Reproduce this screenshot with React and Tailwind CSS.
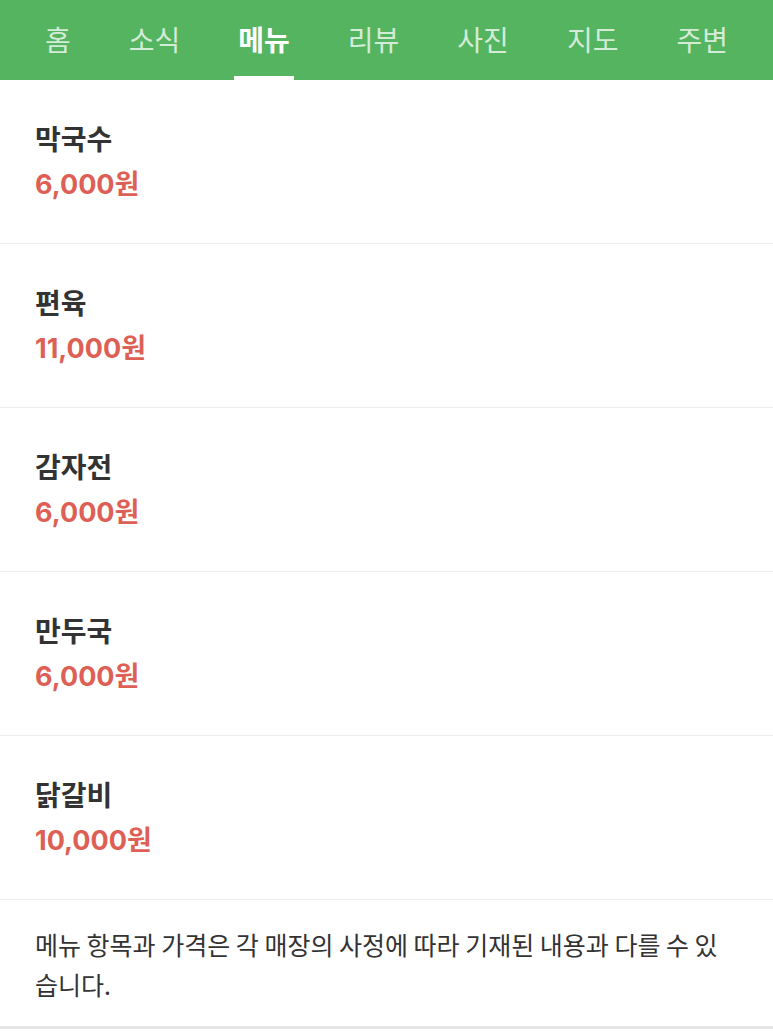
import React from "react"

const tabs = ["홈", "소식", "메뉴", "리뷰", "사진", "지도", "주변"]

const menus = [
  { name: "막국수", price: "6,000원" },
  { name: "편육", price: "11,000원" },
  { name: "감자전", price: "6,000원" },
  { name: "만두국", price: "6,000원" },
  { name: "닭갈비", price: "10,000원" },
]

const font = { fontFamily: '"Noto Sans CJK KR", "Noto Sans", sans-serif' }
const priceFont = { fontFamily: 'Inter, "Noto Sans CJK KR", sans-serif' }

export default function App() {
  return (
    <div className="w-full min-h-screen bg-white" style={font}>
      {/* tab bar */}
      <nav className="h-[80px] bg-[#54b45f] flex items-stretch pl-[41px] gap-[50px]">
        {tabs.map((t) => {
          const active = t === "메뉴"
          return (
            <div key={t} className="relative flex items-center px-[4px] pb-[3px]">
              <span
                className={
                  active
                    ? "text-[28px] font-bold text-white leading-none"
                    : "text-[28px] font-normal text-white/75 leading-none"
                }
              >
                {t}
              </span>
              {active && <div className="absolute left-0 right-0 bottom-0 h-[4px] bg-white" />}
            </div>
          )
        })}
      </nav>

      {/* menu list */}
      <ul>
        {menus.map((m) => (
          <li key={m.name} className="px-[35px] py-[40px] border-b border-[#ececec]">
            <p className="text-[28px] leading-[36px] font-bold text-[#333333]">{m.name}</p>
            <p className="mt-[11px] text-[27px] leading-[36px] font-bold text-[#de5f55]" style={priceFont}>
              {m.price}
            </p>
          </li>
        ))}
      </ul>

      {/* notice */}
      <div className="px-[35px] pt-[24px] pb-[22px] border-b-[3px] border-[#e6e6e6]">
        <p className="text-[25px] leading-[40px] text-[#333333]">
          메뉴 항목과 가격은 각 매장의 사정에 따라 기재된 내용과 다를 수 있습니다.
        </p>
      </div>
    </div>
  )
}
